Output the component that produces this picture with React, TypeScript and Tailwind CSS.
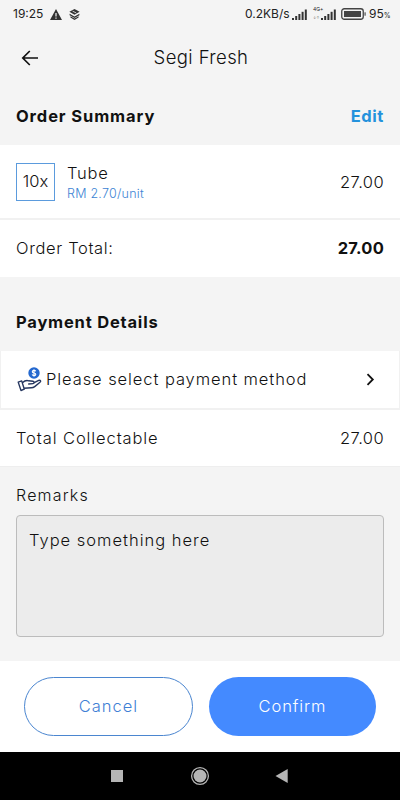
import React from 'react';

const SignalBars: React.FC = () => (
  <svg width="15" height="11" viewBox="0 0 15 11" fill="#333">
    <rect x="0" y="9" width="2" height="2" />
    <rect x="3.2" y="7" width="2" height="4" />
    <rect x="6.4" y="5" width="2" height="6" />
    <rect x="9.6" y="2.8" width="2" height="8.2" />
    <rect x="12.8" y="0.5" width="2" height="10.5" />
  </svg>
);

const StatusBar: React.FC = () => (
  <div className="flex h-7 items-center pr-[9px] pl-[13px] font-normal text-[#222]">
    <span className="w-[37px] text-[12px] leading-none whitespace-nowrap">19:25</span>
    <svg className="mr-[7px]" width="12" height="11" viewBox="0 0 12 11">
      <path d="M6 0 12 11H0Z" fill="#333" />
      <path d="M6 4v3.4M6 8.4v1.3" stroke="#f4f4f4" strokeWidth="1.2" />
    </svg>
    <svg width="11" height="11" viewBox="0 0 11 11" fill="#333">
      <path d="M5.5 0 10.6 2.8 5.5 5.8 0.4 2.8Z" />
      <path d="M0.6 4.7 5.5 7.4 10.4 4.7V6.3L5.5 8.9 0.6 6.3Z" />
      <path d="M1.4 7.3 5.5 9.4 9.6 7.3V8.4L5.5 11 1.4 8.4Z" />
      <path d="M3.6 2.2 7.2 3.9" stroke="#f4f4f4" strokeWidth="0.8" />
    </svg>
    <div className="flex-1" />
    <span className="w-[47px] text-[12px] leading-none whitespace-nowrap">0.2KB/s</span>
    <SignalBars />
    <div className="ml-[6px] flex h-3 w-[8px] flex-col justify-between text-[5px] leading-none whitespace-nowrap">
      <span className="-mt-px">4G+</span>
      <span className="text-[4px] text-[#777]">↓↑</span>
    </div>
    <SignalBars />
    <svg className="ml-[5px]" width="26" height="12" viewBox="0 0 26 12">
      <rect x="0.75" y="0.75" width="21.5" height="10.5" rx="2.5" fill="none" stroke="#444" strokeWidth="1.3" />
      <rect x="3" y="3" width="17" height="6" fill="#444" />
      <rect x="23.4" y="4.3" width="1.4" height="3.4" fill="#666" />
    </svg>
    <span className="ml-[2px] w-[22px] text-[12px] leading-none whitespace-nowrap">
      95<span className="text-[7px]">%</span>
    </span>
  </div>
);

const PayIcon: React.FC = () => (
  <svg className="h-[26px] w-[25px] shrink-0" viewBox="0 0 25 26" fill="none">
    <circle cx="17" cy="6" r="5.7" fill="#2468cf" />
    <path
      d="M18.8 4.3c-.4-.7-1-.9-1.8-.9-1 0-1.7.5-1.7 1.3 0 1.8 3.5.8 3.5 2.6 0 .8-.7 1.3-1.8 1.3-.9 0-1.5-.3-1.9-1M17 2.3v7.4"
      stroke="#fff"
      strokeWidth="1.1"
    />
    <path
      d="M1.2 15.1 4.7 13.9 7.3 22.2 4 23.5ZM5.4 15.8C7.5 13.8 9.4 13 11.6 13.8L16 14.2c1.5.3 1.5 2.3 0 2.4L11.7 17M17.2 15.7 21.7 13.4c1.6-.7 2.7.8 1.3 1.9l-5.3 4.3c-1 .8-2 1.2-3.4 1.2L7 21.2"
      stroke="#25365f"
      strokeWidth="1.4"
      strokeLinecap="round"
      strokeLinejoin="round"
    />
  </svg>
);

export default function App() {
  return (
    <div className="flex h-[800px] w-[400px] flex-col overflow-hidden bg-[#f4f4f4] font-['Inter',sans-serif] text-[16.5px] font-light text-[#111]">
      <StatusBar />

      <header className="grid h-[59px] grid-cols-[60px_1fr_60px] items-center">
        <svg className="ml-[21px]" width="18" height="16" viewBox="0 0 18 16" fill="none" stroke="#111" strokeWidth="1.7">
          <path d="M17 8H2M8.8 1 1.8 8l7 7" />
        </svg>
        <h1 className="pl-[2px] text-center text-[18.5px] tracking-[0.4px]">Segi Fresh</h1>
      </header>

      <div className="flex h-[58px] items-center justify-between px-4 font-bold">
        <h2 className="tracking-[0.9px]">Order Summary</h2>
        <button className="tracking-[0.6px] text-[#2492dc]">Edit</button>
      </div>

      <section className="bg-white">
        <div className="flex h-[75px] items-center border-b-2 border-[#f1f1f1] px-4">
          <div className="flex h-[38px] w-[39px] items-center justify-center border border-[#5b9bdd]">10x</div>
          <div className="ml-3 flex-1 pt-[3px]">
            <div className="leading-[20px] tracking-[0.8px]">Tube</div>
            <div className="text-[12.5px] leading-[21px] tracking-[0.25px] text-[#3d84d4]">RM 2.70/unit</div>
          </div>
          <span className="pt-px tracking-[0.4px]">27.00</span>
        </div>
        <div className="flex h-[57px] items-center justify-between px-4">
          <span className="tracking-[0.65px]">Order Total:</span>
          <span className="font-bold tracking-[0.2px]">27.00</span>
        </div>
      </section>

      <h2 className="flex h-[74px] items-end px-4 pb-[16px] font-bold tracking-[0.8px]">Payment Details</h2>

      <section className="bg-white">
        <div className="flex h-[59px] items-center border-x border-b-2 border-[#f1f1f1] pr-[24px] pl-[16px]">
          <PayIcon />
          <span className="-mt-px ml-[4px] flex-1 tracking-[0.92px] whitespace-nowrap">Please select payment method</span>
          <svg width="9" height="13" viewBox="0 0 9 13" fill="none" stroke="#111" strokeWidth="1.8">
            <path d="m1.5 1.2 5.3 5.3-5.3 5.3" />
          </svg>
        </div>
        <div className="flex h-[56px] items-center justify-between px-4">
          <span className="tracking-[0.9px]">Total Collectable</span>
          <span className="tracking-[0.4px]">27.00</span>
        </div>
      </section>

      <section className="h-[195px] border-t border-[#eeeeee] px-4 pt-[16px]">
        <label htmlFor="remarks" className="block h-[32px] text-[16px] leading-[24px] tracking-[1.2px]">
          Remarks
        </label>
        <textarea
          id="remarks"
          placeholder="Type something here"
          className="block h-[122px] w-full resize-none rounded-[4px] border border-[#bcbcbc] bg-[#ececec] px-3 py-[12px] leading-[24px] tracking-[1px] placeholder:text-[#111]"
        />
      </section>

      <footer className="flex h-[91px] gap-4 bg-white pt-4 pr-[24px] pl-[24px]">
        <button className="h-[59px] flex-1 rounded-full border border-[#4b86d0] tracking-[1px] text-[#3f80d5]">Cancel</button>
        <button className="h-[59px] flex-1 rounded-full bg-[#448aff] tracking-[0.9px] text-white">Confirm</button>
      </footer>

      <nav className="flex h-12 items-center bg-black pl-[111px]">
        <div className="h-3 w-[12px] bg-[#b5b5b5]" />
        <svg className="ml-[67px]" width="20" height="20" viewBox="0 0 20 20">
          <circle cx="10" cy="10" r="8.4" fill="none" stroke="#b5b5b5" strokeWidth="1.3" />
          <circle cx="10" cy="10" r="6.5" fill="#b5b5b5" />
        </svg>
        <svg className="ml-[65px]" width="13" height="14" viewBox="0 0 13 14" fill="#b5b5b5">
          <path d="M0.5 7 12.7 0v14Z" />
        </svg>
      </nav>
    </div>
  );
}
